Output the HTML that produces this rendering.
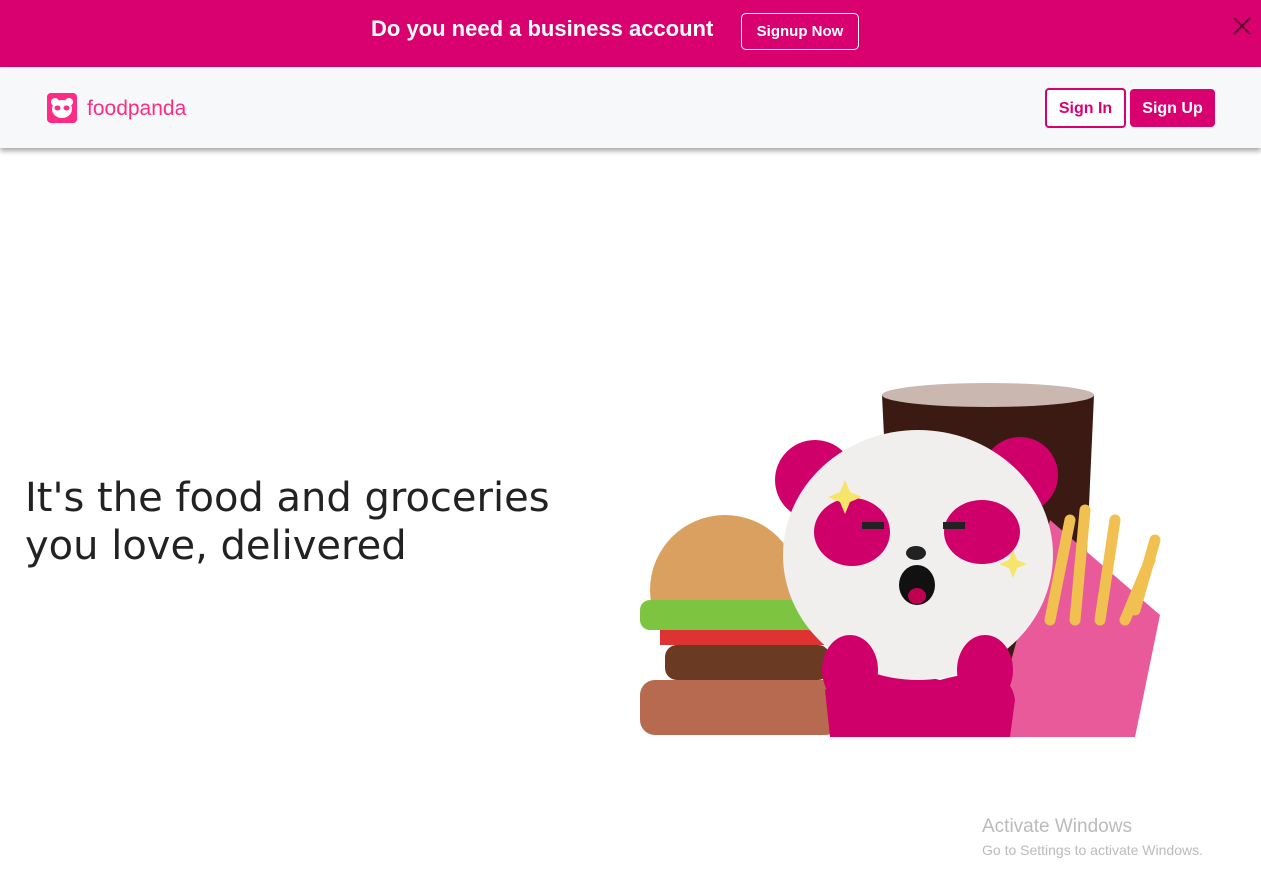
<!DOCTYPE html>
<html><head><meta charset="utf-8"><style>
body{margin:0;width:1261px;height:896px;background:#fff;font-family:"Liberation Sans",sans-serif;overflow:hidden;position:relative}
.banner{position:absolute;left:0;top:0;width:1261px;height:67px;background:#d9006f}
.banner .t{position:absolute;left:371px;top:16px;color:#fff;font-size:22px;font-weight:bold;white-space:nowrap}
.banner .b{position:absolute;left:741px;top:13px;width:118px;height:37px;border:1px solid #fff;border-radius:5px;box-sizing:border-box;color:#fff;font-weight:bold;font-size:15px;text-align:center;line-height:36px}
.x{position:absolute;left:1232px;top:16px}
.hdr{position:absolute;left:0;top:67px;width:1261px;height:81px;background:#f7f8fa;box-shadow:0 3px 5px rgba(0,0,0,.35)}
.logo{position:absolute;left:47px;top:26px;width:30px;height:30px;background:#ff2b85;border-radius:4px}
.lt{position:absolute;left:87px;top:30px;color:#ff2b85;font-size:21px}
.si{position:absolute;left:1045px;top:21px;width:81px;height:40px;border:2px solid #d9006f;border-radius:4px;box-sizing:border-box;color:#d9006f;font-weight:bold;font-size:16px;text-align:center;line-height:38px;background:#fff}
.su{position:absolute;left:1130px;top:22px;width:85px;height:38px;background:#d9006f;border-radius:4px;color:#fff;font-weight:bold;font-size:16px;text-align:center;line-height:40px}
h1{position:absolute;left:25px;top:474px;margin:0;font-family:"DejaVu Sans",sans-serif;font-weight:normal;font-size:40px;line-height:48px;color:#222;white-space:nowrap}
.aw{position:absolute;left:982px;top:816px;color:#bbb;font-size:19px}
.aw2{position:absolute;left:982px;top:842px;color:#bbb;font-size:14px}
</style></head><body>
<div class="banner"><div class="t">Do you need a business account</div><div class="b">Signup Now</div>
<svg class="x" width="20" height="20"><path d="M2 2L18 18M18 2L2 18" stroke="#6a0030" stroke-width="2"/></svg></div>
<div class="hdr"><div class="logo"><svg width="30" height="30"><circle cx="8" cy="9" r="4" fill="#fff"/><circle cx="22" cy="9" r="4" fill="#fff"/><ellipse cx="15" cy="16" rx="10" ry="9" fill="#fff"/><ellipse cx="10.5" cy="15" rx="3" ry="2.5" fill="#ff2b85"/><ellipse cx="19.5" cy="15" rx="3" ry="2.5" fill="#ff2b85"/></svg></div><div class="lt">foodpanda</div>
<div class="si">Sign In</div><div class="su">Sign Up</div></div>
<h1>It's the food and groceries<br>you love, delivered</h1>
<svg style="position:absolute;left:630px;top:360px" width="540" height="380">
<path d="M252 35 Q360 20 464 35 L452 300 L265 300Z" fill="#3a1a12"/>
<ellipse cx="358" cy="35" rx="106" ry="12" fill="#c9b7b0"/>
<path d="M420 160 L530 255 L505 377 L360 377Z" fill="#e85a9a"/>
<g stroke="#f0c050" stroke-width="11" stroke-linecap="round"><path d="M420 260L440 160"/><path d="M445 260L455 150"/><path d="M470 260L485 160"/><path d="M495 260L520 200"/><path d="M505 250L525 180"/></g>
<ellipse cx="95" cy="230" rx="75" ry="75" fill="#d9a060"/>
<rect x="10" y="240" width="180" height="30" rx="10" fill="#7dc540"/>
<rect x="30" y="270" width="170" height="15" fill="#d33"/>
<rect x="35" y="285" width="165" height="35" rx="12" fill="#6b3a22"/>
<rect x="10" y="320" width="200" height="55" rx="15" fill="#b86a50"/>
<path d="M195 330 Q230 300 310 320 Q380 300 385 340 L380 377 L200 377Z" fill="#d0006a"/>
<circle cx="185" cy="120" r="40" fill="#d0006a"/>
<circle cx="390" cy="115" r="38" fill="#d0006a"/>
<ellipse cx="288" cy="195" rx="135" ry="125" fill="#f1eeee"/>
<ellipse cx="222" cy="172" rx="38" ry="34" fill="#d0006a"/>
<ellipse cx="352" cy="172" rx="38" ry="32" fill="#d0006a"/>
<rect x="232" y="162" width="22" height="7" fill="#222"/><rect x="313" y="162" width="22" height="7" fill="#222"/>
<ellipse cx="286" cy="193" rx="10" ry="7" fill="#222"/>
<ellipse cx="287" cy="225" rx="18" ry="20" fill="#111"/>
<ellipse cx="287" cy="236" rx="9" ry="8" fill="#c00050"/>
<ellipse cx="220" cy="310" rx="28" ry="35" fill="#d0006a"/>
<ellipse cx="355" cy="310" rx="28" ry="35" fill="#d0006a"/>
<path d="M215 120l5 12 12 5-12 5-5 12-5-12-12-5 12-5z" fill="#f7e46a"/>
<path d="M383 190l4 10 10 4-10 4-4 10-4-10-10-4 10-4z" fill="#f7e46a"/>
</svg>
<div class="aw">Activate Windows</div><div class="aw2">Go to Settings to activate Windows.</div>
</body></html>
